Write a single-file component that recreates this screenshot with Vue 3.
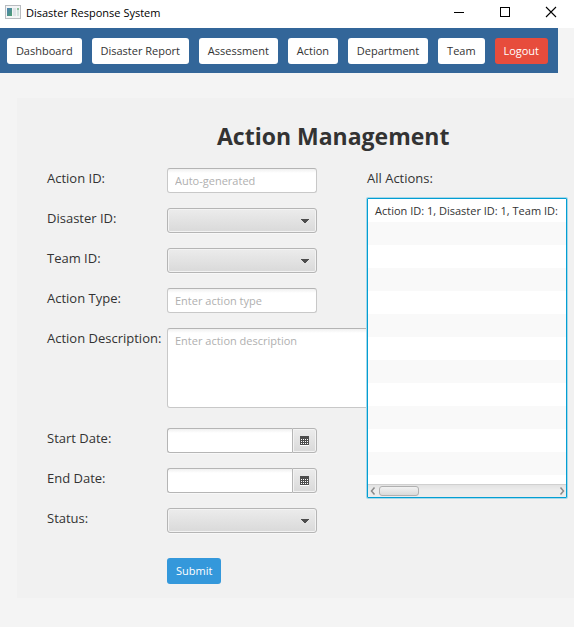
<script setup>
import { ref } from 'vue'

const navItems = ['Dashboard', 'Disaster Report', 'Assessment', 'Action', 'Department', 'Team']

const form = ref({
  id: '',
  disasterId: '',
  teamId: '',
  type: '',
  description: '',
  startDate: '',
  endDate: '',
  status: '',
})

const actions = ['Action ID: 1, Disaster ID: 1, Team ID:', '', '', '', '', '', '', '', '', '', '', '', '']
const dots = [0, 1, 2, 3].flatMap((c) => [0, 1, 2].map((r) => ({ x: 1 + c * 2, y: 3 + r * 2 })))
</script>

<template>
  <div class="window">
    <header class="titlebar">
      <svg class="app-icon" width="16" height="14" viewBox="0 0 16 14" shape-rendering="crispEdges" aria-hidden="true">
        <defs>
          <linearGradient id="pane" x1="0" y1="0" x2="1" y2="1">
            <stop offset="0" stop-color="#4c80b4" />
            <stop offset="1" stop-color="#4fa070" />
          </linearGradient>
        </defs>
        <rect x="0" y="0" width="16" height="14" fill="#b9bcc0" />
        <rect x="1" y="1" width="14" height="12" fill="#f4f5f6" />
        <rect x="2" y="3" width="5" height="8" fill="url(#pane)" />
        <rect x="8" y="3" width="3" height="8" fill="#dfe4e8" />
        <rect x="12" y="3" width="2" height="8" fill="#d3e4df" />
        <rect x="12" y="3" width="2" height="2" fill="#8fc09c" />
      </svg>
      <span class="title">Disaster Response System</span>
      <button class="caption" type="button" aria-label="Minimize">
        <svg width="12" height="12" shape-rendering="crispEdges"><path d="M1 6.5H11" stroke="#000" /></svg>
      </button>
      <button class="caption" type="button" aria-label="Maximize">
        <svg width="12" height="12" shape-rendering="crispEdges"><path d="M1.500 1.500H10.500V10.500H1.500Z" fill="none" stroke="#000" /></svg>
      </button>
      <button class="caption" type="button" aria-label="Close">
        <svg width="12" height="12"><path d="M1 1L11 11M11 1L1 11" stroke="#000" stroke-width="1.100" /></svg>
      </button>
    </header>

    <nav class="navbar">
      <button v-for="item in navItems" :key="item" type="button" class="nav-btn">{{ item }}</button>
      <button type="button" class="nav-btn logout">Logout</button>
    </nav>

    <main class="panel">
      <h1>Action Management</h1>
      <div class="columns">
        <form class="form" @submit.prevent>
          <label for="action-id">Action ID:</label>
          <input id="action-id" v-model="form.id" class="field" type="text" placeholder="Auto-generated" readonly />

          <label for="disaster-id">Disaster ID:</label>
          <select id="disaster-id" v-model="form.disasterId" class="combo">
            <option value=""></option>
          </select>

          <label for="team-id">Team ID:</label>
          <select id="team-id" v-model="form.teamId" class="combo">
            <option value=""></option>
          </select>

          <label for="action-type">Action Type:</label>
          <input id="action-type" v-model="form.type" class="field" type="text" placeholder="Enter action type" />

          <label for="description">Action Description:</label>
          <textarea id="description" v-model="form.description" class="field area" placeholder="Enter action description"></textarea>

          <label for="start-date">Start Date:</label>
          <div class="date">
            <input id="start-date" v-model="form.startDate" class="field" type="text" />
            <button type="button" aria-label="Choose start date">
              <svg width="9" height="10" shape-rendering="crispEdges">
                <rect width="9" height="9" fill="#4d4d4d" />
                <rect y="9" width="9" height="1" fill="#fff" />
                <rect v-for="(d, i) in dots" :key="i" :x="d.x" :y="d.y" width="1" height="1" fill="#fff" />
              </svg>
            </button>
          </div>

          <label for="end-date">End Date:</label>
          <div class="date">
            <input id="end-date" v-model="form.endDate" class="field" type="text" />
            <button type="button" aria-label="Choose end date">
              <svg width="9" height="10" shape-rendering="crispEdges">
                <rect width="9" height="9" fill="#4d4d4d" />
                <rect y="9" width="9" height="1" fill="#fff" />
                <rect v-for="(d, i) in dots" :key="i" :x="d.x" :y="d.y" width="1" height="1" fill="#fff" />
              </svg>
            </button>
          </div>

          <label for="status">Status:</label>
          <select id="status" v-model="form.status" class="combo">
            <option value=""></option>
          </select>

          <button class="submit" type="submit">Submit</button>
        </form>

        <section class="list-column">
          <h2 id="list-title">All Actions:</h2>
          <div class="list-view">
            <ul aria-labelledby="list-title">
              <li v-for="(action, i) in actions" :key="i">{{ action }}</li>
            </ul>
            <div class="scrollbar">
              <button type="button" aria-label="Scroll left">
                <svg width="6" height="8"><path d="M4.500 0.500L1.500 4L4.500 7.500" fill="none" stroke="#8a8a8a" stroke-width="1.500" /></svg>
              </button>
              <div class="track"><div class="thumb"></div></div>
              <button type="button" aria-label="Scroll right">
                <svg width="6" height="8"><path d="M1.500 0.500L4.500 4L1.500 7.500" fill="none" stroke="#8a8a8a" stroke-width="1.500" /></svg>
              </button>
            </div>
          </div>
        </section>
      </div>
    </main>
  </div>
</template>

<style>
body {
  margin: 0;
  background: #f4f4f4;
}
</style>

<style scoped>
.window {
  min-height: 100vh;
  overflow: hidden;
  color: #333;
  font-family: "Open Sans", "Noto Sans", sans-serif;
  font-size: 11px;
}

.window * {
  box-sizing: border-box;
}

button,
input,
select,
textarea {
  margin: 0;
  font: inherit;
  color: inherit;
}

.titlebar {
  display: flex;
  align-items: center;
  height: 28px;
  padding-left: 5px;
  background: #fff;
  color: #000;
}

.app-icon {
  flex: none;
  margin-bottom: 4px;
}

.title {
  flex: 1;
  padding: 0 0 4px 5px;
  white-space: nowrap;
}

.caption {
  display: flex;
  align-items: center;
  justify-content: center;
  width: 46px;
  height: 24px;
  margin-bottom: 4px;
  padding: 0;
  border: 0;
  background: transparent;
}

.navbar {
  display: flex;
  gap: 10px;
  margin-right: 16px;
  padding: 10px 10px 9px 7px;
  background: #369;
}

.nav-btn {
  flex: 1 1 auto;
  height: 26px;
  padding: 0 4px;
  border: 0;
  border-radius: 3px;
  background: #fff;
  line-height: 26px;
  white-space: nowrap;
}

.nav-btn.logout {
  background: #e74c3c;
  color: #fff;
}

.panel {
  margin: 25px 0 0 17px;
  padding: 22px 7px 14px 30px;
  background: #f1f1f1;
}

h1 {
  margin: 0 0 16px;
  padding-left: 170px;
  font-size: 23px;
  line-height: 32px;
  white-space: nowrap;
}

.columns {
  display: flex;
  gap: 50px;
}

.form {
  display: grid;
  flex: none;
  grid-template-columns: 120px 150px;
  row-gap: 15px;
  align-items: start;
}

.form label,
h2 {
  margin: 0;
  font-size: 13px;
  font-weight: 400;
  line-height: 20px;
  white-space: nowrap;
}

.field {
  width: 100%;
  height: 25px;
  padding: 0 7px;
  border: 1px solid #c8c8c8;
  border-top-color: #b4b4b4;
  border-radius: 3px;
  outline: 0;
  background: linear-gradient(#f0f0f0, #fff 4px);
}

.field::placeholder {
  color: #b0b0b0;
  opacity: 1;
}

.area {
  width: 210px;
  height: 80px;
  margin-bottom: 5px;
  padding-top: 3px;
  line-height: 17px;
  resize: none;
}

.combo {
  width: 100%;
  height: 25px;
  padding: 0 20px 0 7px;
  border: 1px solid #b5b5b5;
  border-radius: 3px;
  outline: 0;
  appearance: none;
  background:
    linear-gradient(#4d4d4d, #4d4d4d) right 7px top 10px / 8px 1px no-repeat,
    linear-gradient(#4d4d4d, #4d4d4d) right 8px top 11px / 6px 1px no-repeat,
    linear-gradient(#4d4d4d, #4d4d4d) right 9px top 12px / 4px 1px no-repeat,
    linear-gradient(#4d4d4d, #4d4d4d) right 10px top 13px / 2px 1px no-repeat,
    linear-gradient(#ececec, #d9d9d9);
  box-shadow: inset 0 0 0 1px #f3f3f3, 0 1px 0 #f8f8f8;
}

.date {
  display: flex;
  box-shadow: 0 1px 0 #f8f8f8;
}

.date .field {
  flex: 1;
  min-width: 0;
  border-color: #b5b5b5;
  border-right: 0;
  border-radius: 3px 0 0 3px;
}

.date button {
  display: flex;
  align-items: center;
  justify-content: center;
  width: 25px;
  height: 25px;
  padding: 0;
  border: 1px solid #b5b5b5;
  border-radius: 0 3px 3px 0;
  background: linear-gradient(#ececec, #d9d9d9);
  box-shadow: inset 0 0 0 1px #f3f3f3;
}

.submit {
  grid-column: 2;
  justify-self: start;
  height: 26px;
  margin-top: 10px;
  padding: 0 9px;
  border: 0;
  border-radius: 3px;
  background: #3498db;
  color: #fff;
  line-height: 26px;
}

.list-column {
  position: relative;
  z-index: 1;
  flex: 1;
  min-width: 0;
}

.list-view {
  display: flex;
  flex-direction: column;
  height: 300px;
  margin-top: 10px;
  border: 1px solid #039ed3;
  border-radius: 1px;
  background: #fff;
  box-shadow: 0 0 0 1px #a5d8e9;
}

ul {
  flex: 1;
  min-height: 0;
  margin: 0;
  padding: 0;
  overflow: hidden;
  list-style: none;
}

li {
  height: 23px;
  padding-left: 7px;
  overflow: hidden;
  line-height: 23px;
  white-space: nowrap;
}

li:nth-child(even) {
  background: #f9f9f9;
}

.scrollbar {
  display: flex;
  height: 13px;
  border-top: 1px solid #d0d0d0;
  background: linear-gradient(#e2e2e2, #ececec 5px);
}

.scrollbar button {
  display: flex;
  align-items: center;
  justify-content: center;
  width: 9px;
  padding: 0;
  border: 0;
  background: transparent;
}

.track {
  flex: 1;
  padding: 1px 2px;
}

.thumb {
  width: 40px;
  height: 10px;
  border: 1px solid #b0b0b0;
  border-radius: 3px;
  background: linear-gradient(#f2f2f2, #dadada);
}
</style>
